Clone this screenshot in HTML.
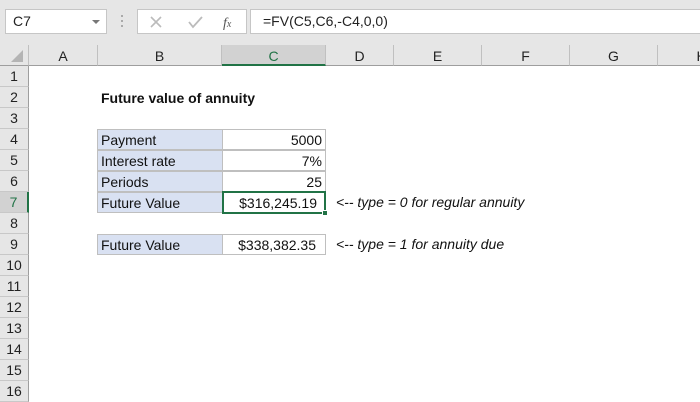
<!DOCTYPE html>
<html><head><style>
*{margin:0;padding:0;box-sizing:border-box}
body{width:700px;height:400px;overflow:hidden;background:#fff;font-family:"Liberation Sans",sans-serif;position:relative}
.top{position:absolute;left:0;top:0;width:700px;height:45px;background:#e6e6e6}
.nb{position:absolute;left:5px;top:9px;width:102px;height:25px;background:#fff;border:1px solid #c6c6c6;font-size:14px;line-height:23px;padding-left:7px;color:#222}
.nb .arr{position:absolute;right:6px;top:10px;width:0;height:0;border-left:4px solid transparent;border-right:4px solid transparent;border-top:4px solid #777}
.dots{position:absolute;left:121px;top:15px;width:2px;height:14px;background:repeating-linear-gradient(#aaa 0 2px,transparent 2px 5px)}
.fb{position:absolute;left:137px;top:9px;width:110px;height:25px;background:#fff;border:1px solid #c6c6c6}
.fx{position:absolute;left:250px;top:9px;width:460px;height:25px;background:#fff;border:1px solid #c6c6c6;font-size:14px;line-height:23px;padding-left:12px;color:#222}
.ch{position:absolute;top:45px;height:21px;background:#e6e6e6;border-bottom:1px solid #9e9e9e;border-right:1px solid #c0c0c0;font-size:14px;text-align:center;line-height:22px;color:#222}
.rh{position:absolute;left:0;width:29px;height:21px;background:#e6e6e6;border-right:1px solid #9e9e9e;border-bottom:1px solid #c8c8c8;font-size:14px;text-align:center;line-height:21px;color:#222}
.c{position:absolute;height:21px;font-size:14px;line-height:20px;color:#111;white-space:nowrap}
.lab{background:#d9e1f2;border:1px solid #bfbfbf;padding-left:3px}
.val{border:1px solid #bfbfbf;text-align:right;padding-right:3px}
.note{font-style:italic}
</style></head><body>
<div class="top"></div>
<div class="nb">C7<div class="arr"></div></div>
<div class="dots"></div>
<div class="fb">
<svg width="110" height="25" style="position:absolute;left:0;top:0">
<path d="M13 7 L23 17 M23 7 L13 17" stroke="#bbb" stroke-width="1.6"/>
<path d="M51 12 L55 17 L64 7" stroke="#bbb" stroke-width="1.8" fill="none"/>
<text x="85" y="17" font-family="Liberation Serif,serif" font-style="italic" font-size="14" fill="#555">f<tspan font-size="10">x</tspan></text>
</svg></div>
<div class="fx">=FV(C5,C6,-C4,0,0)</div>

<div class="ch" style="left:0;width:29px;border-right:1px solid #c0c0c0"><svg width="20" height="20" style="position:absolute;left:7px;top:1px"><path d="M16 4 L16 16 L4 16Z" fill="#b4b4b4"/></svg></div>
<div class="ch" style="left:29px;width:69px">A</div>
<div class="ch" style="left:98px;width:124px">B</div>
<div class="ch" style="left:222px;width:104px;background:#d2d2d2;border-bottom:2px solid #217346;color:#217346">C</div>
<div class="ch" style="left:326px;width:68px">D</div>
<div class="ch" style="left:394px;width:88px">E</div>
<div class="ch" style="left:482px;width:88px">F</div>
<div class="ch" style="left:570px;width:88px">G</div>
<div class="ch" style="left:658px;width:88px">H</div>

<div class="rh" style="top:66px">1</div>
<div class="rh" style="top:87px">2</div>
<div class="rh" style="top:108px">3</div>
<div class="rh" style="top:129px">4</div>
<div class="rh" style="top:150px">5</div>
<div class="rh" style="top:171px">6</div>
<div class="rh" style="top:192px;background:#d2d2d2;border-right:2px solid #217346;color:#217346">7</div>
<div class="rh" style="top:213px">8</div>
<div class="rh" style="top:234px">9</div>
<div class="rh" style="top:255px">10</div>
<div class="rh" style="top:276px">11</div>
<div class="rh" style="top:297px">12</div>
<div class="rh" style="top:318px">13</div>
<div class="rh" style="top:339px">14</div>
<div class="rh" style="top:360px">15</div>
<div class="rh" style="top:381px">16</div>

<div class="c" style="left:101px;top:88px;font-weight:bold">Future value of annuity</div>

<div class="c lab" style="left:97px;top:129px;width:126px">Payment</div>
<div class="c val" style="left:222px;top:129px;width:104px">5000</div>
<div class="c lab" style="left:97px;top:150px;width:126px">Interest rate</div>
<div class="c val" style="left:222px;top:150px;width:104px">7%</div>
<div class="c lab" style="left:97px;top:171px;width:126px">Periods</div>
<div class="c val" style="left:222px;top:171px;width:104px">25</div>
<div class="c lab" style="left:97px;top:192px;width:126px">Future Value</div>
<div class="c val" style="left:222px;top:191px;width:104px;height:23px;border:2px solid #217346;padding-right:7px;line-height:20px">$316,245.19</div>
<div style="position:absolute;left:322px;top:210px;width:6px;height:6px;background:#217346;border:1px solid #fff"></div>
<div class="c note" style="left:336px;top:192px">&lt;-- type = 0 for regular annuity</div>

<div class="c lab" style="left:97px;top:234px;width:126px">Future Value</div>
<div class="c val" style="left:222px;top:234px;width:104px;padding-right:9px">$338,382.35</div>
<div class="c note" style="left:336px;top:234px">&lt;-- type = 1 for annuity due</div>
</body></html>
